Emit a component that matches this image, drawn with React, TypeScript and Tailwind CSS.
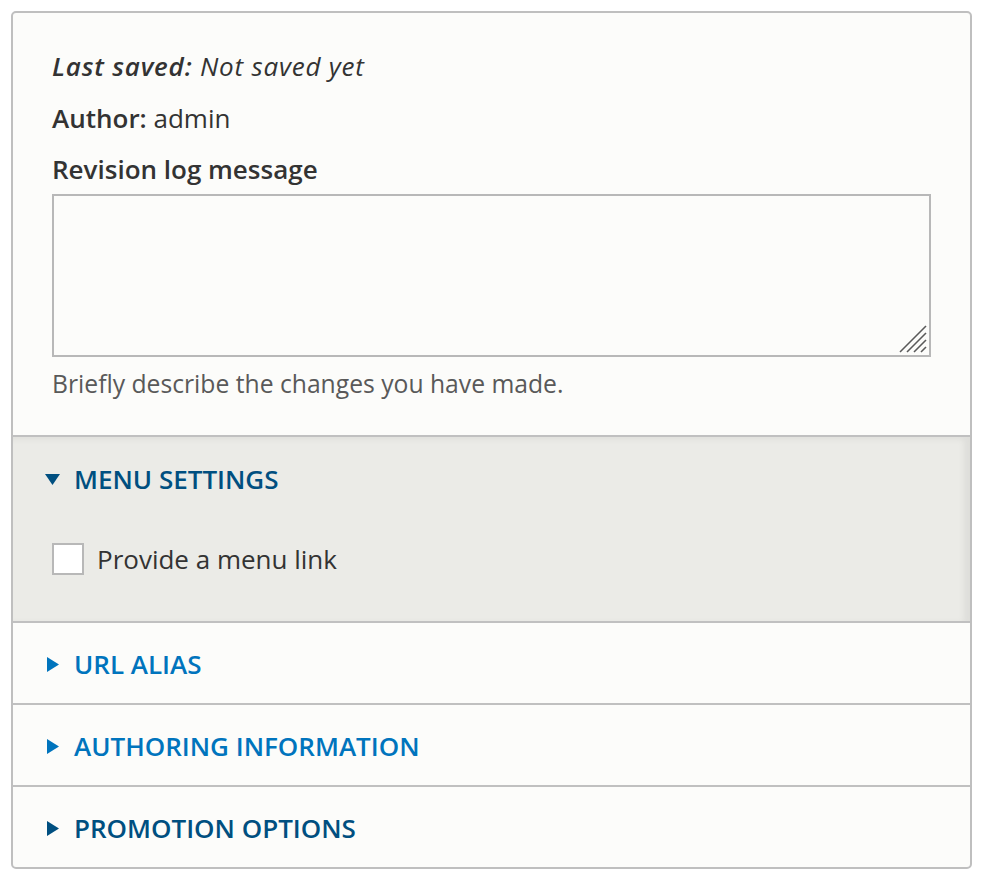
import React from 'react';

const sections = [
  { title: 'URL ALIAS', color: 'text-[#0074bd]' },
  { title: 'AUTHORING INFORMATION', color: 'text-[#0074bd]' },
  { title: 'PROMOTION OPTIONS', color: 'text-[#004f80]' },
];

const ArrowRight = ({ className }: { className: string }) => (
  <svg width="12" height="15" viewBox="0 0 12 15" className={className}>
    <path d="M0 0 L12 7.5 L0 15 Z" fill="currentColor" />
  </svg>
);

const ArrowDown = () => (
  <svg width="15" height="11" viewBox="0 0 15 11" className="text-[#004f80]">
    <path d="M0 0 L15 0 L7.5 11 Z" fill="currentColor" />
  </svg>
);

const App: React.FC = () => {
  return (
    <div className="min-h-[880px] bg-white pl-[11px] pt-[11px] font-['Open_Sans',sans-serif] text-[#333]">
      <div className="w-[961px] overflow-hidden rounded-[5px] border-2 border-[#bfbfbf] bg-[#fcfcfa]">
        {/* revision info */}
        <div className="px-[39px] pb-[35px] pt-[34px] text-[26px]">
          <div className="h-[39px] leading-[39px] italic tracking-[0.8px]">
            <span className="font-semibold">Last saved:</span> Not saved yet
          </div>
          <div className="mt-[13px] h-[39px] leading-[39px]">
            <span className="font-semibold">Author:</span> admin
          </div>
          <div className="mt-[12px] h-[39px] font-semibold leading-[39px]">Revision log message</div>
          <div className="relative mt-[5px] h-[163px] w-[879px] border-2 border-[#b8b8b8] bg-[#fcfcfa]">
            <svg width="30" height="30" viewBox="0 0 30 30" className="absolute bottom-[1px] right-[1px]">
              <g stroke="#5a5a5a" strokeWidth="1.6">
                <line x1="28" y1="2" x2="2" y2="28" />
                <line x1="28" y1="9" x2="9" y2="28" />
                <line x1="28" y1="16" x2="16" y2="28" />
                <line x1="28" y1="23" x2="23" y2="28" />
              </g>
            </svg>
          </div>
          <div className="mt-[10px] h-[33px] text-[24.7px] leading-[33px] text-[#595959]">
            Briefly describe the changes you have made.
          </div>
        </div>

        {/* menu settings, open */}
        <div className="border-t-2 border-[#c0c0c0] bg-[#ebebe7] shadow-[inset_-6px_2px_6px_rgba(0,0,0,0.06)]">
          <div className="flex h-[84px] items-center gap-[14px] pl-[32px]">
            <ArrowDown />
            <span className="text-[26px] font-semibold text-[#004f80]">MENU SETTINGS</span>
          </div>
          <div className="flex items-center gap-[13px] pb-[46px] pl-[39px] pt-[22px]">
            <div className="h-[32px] w-[32px] border-2 border-[#b8b8b8] bg-white" />
            <span className="text-[26px] leading-[32px]">Provide a menu link</span>
          </div>
        </div>

        {/* collapsed sections */}
        {sections.map((s) => (
          <div key={s.title} className="flex h-[82px] items-center gap-[15px] border-t-2 border-[#c0c0c0] pl-[34px] pt-[2px]">
            <ArrowRight className={s.color} />
            <span className={`text-[26px] font-semibold ${s.color}`}>{s.title}</span>
          </div>
        ))}
      </div>
    </div>
  );
};

export default App;
